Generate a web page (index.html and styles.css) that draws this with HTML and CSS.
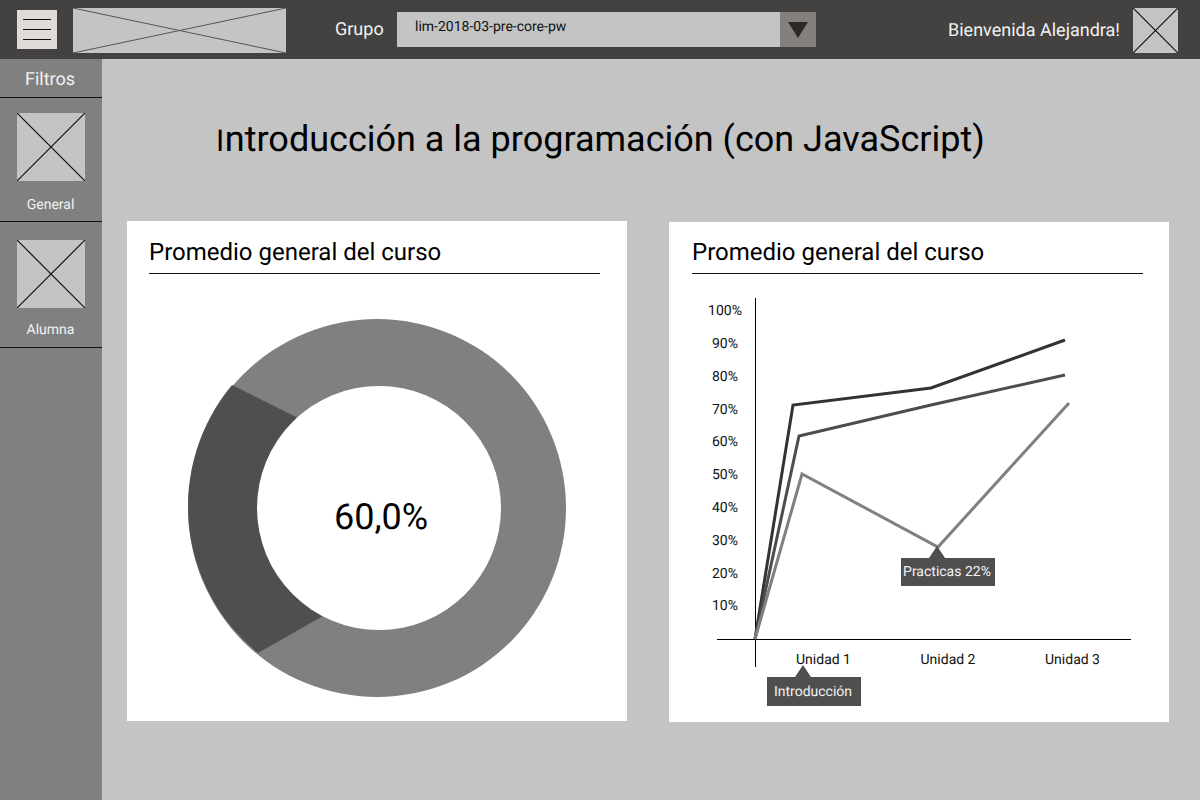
FILE: index.html
```html
<!DOCTYPE html>
<html lang="es">
<head>
  <meta charset="UTF-8" />
  <title>Introducción a la programación</title>
  <link rel="stylesheet" href="styles.css">
</head>
<body>
  <header class="topbar">
    <div class="burger"><span></span><span></span><span></span></div>
    <svg class="logo" viewBox="0 0 213 45" preserveAspectRatio="none">
      <path d="M0 0L213 45M213 0L0 45" />
    </svg>
    <span class="group-label">Grupo</span>
    <div class="select">
      <span class="select-text">lim-2018-03-pre-core-pw</span>
      <div class="select-arrow"><i></i></div>
    </div>
    <span class="welcome">Bienvenida Alejandra!</span>
    <svg class="avatar" viewBox="0 0 45 45">
      <path d="M0 0L45 45M45 0L0 45" />
    </svg>
  </header>

  <div class="layout">
    <aside class="sidebar">
      <div class="side-title">Filtros</div>
      <div class="side-item">
        <svg class="thumb" viewBox="0 0 68 68"><path d="M0 0L68 68M68 0L0 68" /></svg>
        <span>General</span>
      </div>
      <div class="side-item alt">
        <svg class="thumb" viewBox="0 0 68 68"><path d="M0 0L68 68M68 0L0 68" /></svg>
        <span>Alumna</span>
      </div>
    </aside>

    <main class="content">
      <h1 class="page-title"><span class="first">I</span>ntroducción a la programación (con JavaScript)</h1>
      <div class="cards">
        <section class="card">
          <h2 class="card-title">Promedio general del curso</h2>
          <svg class="chart" viewBox="127 274 500 447">
            <circle cx="377" cy="508" r="189" fill="#808080" />
            <path d="M232 385A189 189 0 0 0 258 653L323 616L340 500L296 417Z" fill="#4f4f4f" />
            <circle cx="379" cy="508" r="122" fill="#fff" />
            <text class="donut-value" x="381" y="529">60,0%</text>
          </svg>
        </section>

        <section class="card card-right">
          <h2 class="card-title">Promedio general del curso</h2>
          <svg class="chart" viewBox="669 274 500 448">
            <g class="tick">
              <text x="725" y="315">100%</text>
              <text x="725" y="348">90%</text>
              <text x="725" y="381">80%</text>
              <text x="725" y="414">70%</text>
              <text x="725" y="446">60%</text>
              <text x="725" y="479">50%</text>
              <text x="725" y="512">40%</text>
              <text x="725" y="545">30%</text>
              <text x="725" y="578">20%</text>
              <text x="725" y="610">10%</text>
              <text x="823.5" y="664">Unidad 1</text>
              <text x="948" y="664">Unidad 2</text>
              <text x="1072.5" y="664">Unidad 3</text>
            </g>
            <path class="axis" d="M755.5 298V667M717 639.5H1131" />
            <polyline class="line" stroke="#333" points="755,639 793,405 931,388 1065,340" />
            <polyline class="line" stroke="#4d4d4d" points="755,639 799,436 931,405 1065,375" />
            <polyline class="line" stroke="#808080" points="755,639 802,474 938,547 1069,403" />
          </svg>
          <div class="tip tip-practicas">Practicas 22%</div>
          <div class="tip tip-intro">Introducción</div>
        </section>
      </div>
    </main>
  </div>
</body>
</html>
```

FILE: styles.css
```css
* { box-sizing: border-box; }
html, body { margin: 0; height: 800px; overflow: hidden; }
body { font-family: Roboto, "Liberation Sans", sans-serif; background: #c4c4c4; color: #000;
  text-rendering: geometricPrecision; }

.topbar { display: flex; align-items: center; height: 59px; background: #434240; color: #f2f2f2; }
.burger { display: flex; flex-direction: column; justify-content: center; gap: 9px;
  width: 40px; height: 39px; margin-left: 17px; margin-top: -1px; background: #e0dbd8; }
.burger span { display: block; height: 1px; margin: 0 6px; background: #111; }
.logo { width: 213px; height: 45px; margin-left: 16px; margin-top: 2px; background: #c4c4c4; }
.logo path { stroke: #555; stroke-width: 1; fill: none; }
.group-label { margin-left: 49px; width: 62px; font-size: 18px; }
.select { display: flex; width: 419px; height: 35px; background: #c4c4c4; color: #111; }
.select-text { flex: 1; padding: 7px 0 0 18px; font-size: 14px; line-height: 17px; }
.select-arrow { display: flex; align-items: center; justify-content: center; width: 36px; background: #857f7d; }
.select-arrow i { width: 0; height: 0; margin-top: 1px; border-left: 10px solid transparent;
  border-right: 10px solid transparent; border-top: 16px solid #2b2928; }
.welcome { margin-left: auto; padding-top: 2px; font-size: 18px; }
.avatar { width: 45px; height: 45px; margin: 2px 22px 0 13px; background: #c4c4c4; }
.avatar path { stroke: #111; stroke-width: 1.2; fill: none; }

.layout { display: flex; height: 741px; }
.sidebar { width: 102px; background: #808080; color: #f2f2f2; }
.side-title { height: 39px; padding: 10px 2px 0 0; border-bottom: 1px solid #111;
  text-align: center; font-size: 18px; line-height: 21px; }
.side-item { display: flex; flex-direction: column; align-items: center; height: 124px;
  padding-top: 15px; border-bottom: 1px solid #111; font-size: 14px; }
.side-item.alt { height: 126px; padding-top: 18px; }
.side-item span { margin-top: 16px; padding-right: 1px; line-height: 16px; }
.side-item.alt span { margin-top: 14px; }
.thumb { width: 68px; height: 68px; background: #c4c4c4; }
.thumb path { stroke: #111; stroke-width: 1.2; fill: none; }

.content { flex: 1; padding: 0 31px 0 25px; }
.page-title { margin: 0 0 0 89px; padding-top: 58px; height: 162px; font-size: 36px; line-height: 44px; font-weight: 400; }
.page-title .first { margin-right: 0.7px; font-size: 30px; }
.cards { display: flex; gap: 42px; align-items: flex-start; }
.card { position: relative; width: 500px; height: 500px; background: #fff; }
.card-right { margin-top: 1px; }
.card-title { margin: 0 27px 0 22px; padding-top: 17px; height: 53px; border-bottom: 1px solid #111;
  font-size: 24px; line-height: 29px; font-weight: 400; }
.card-right .card-title { margin: 0 26px 0 23px; padding-top: 16px; height: 52px; }
.chart { display: block; width: 500px; height: 447px; }
.card-right .chart { height: 448px; }
.donut-value { font-size: 36px; text-anchor: middle; fill: #000; }
.tick text { font-size: 14px; text-anchor: middle; fill: #111; }
.axis { stroke: #000; stroke-width: 1; fill: none; }
.line { fill: none; stroke-width: 3; }

.tip { position: absolute; height: 29px; width: 94px; padding-right: 2px; background: #4f4f4f; color: #f2f2f2;
  font-size: 14px; line-height: 30px; text-align: center; white-space: nowrap; }
.tip::before { content: ""; position: absolute; top: -12px; border-left: 8px solid transparent;
  border-right: 8px solid transparent; border-bottom: 12px solid #4f4f4f; }
.tip-practicas { left: 232px; top: 336px; height: 28px; line-height: 28px; }
.tip-practicas::before { left: 28px; }
.tip-intro { left: 98px; top: 455px; }
.tip-intro::before { left: 28px; }
```
